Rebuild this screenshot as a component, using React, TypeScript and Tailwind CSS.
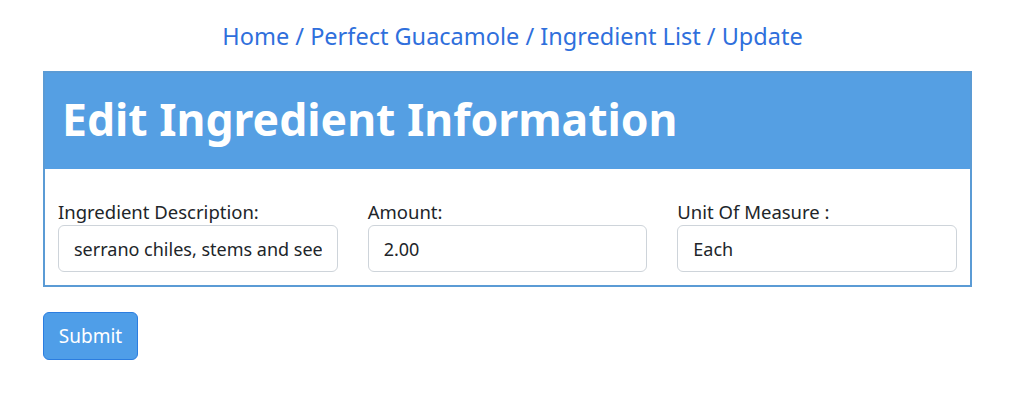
import React from 'react';

const fields = [
  { label: 'Ingredient Description:', value: 'serrano chiles, stems and seeds removed, minced' },
  { label: 'Amount:', value: '2.00' },
  { label: 'Unit Of Measure :', value: 'Each' },
];

export default function App() {
  return (
    <div className="w-[1025px] h-[405px] bg-white font-['Noto_Sans',sans-serif] text-[#212529]">
      <nav className="pt-[19px] text-center text-[23.5px] leading-[34px] text-[#2f6fdc]">
        <a href="#">Home</a> / <a href="#">Perfect Guacamole</a> / <a href="#">Ingredient List</a> / <a href="#">Update</a>
      </nav>

      <div className="mx-[43px] mt-[18px] w-[929px] border-2 border-[#5b9bd5]">
        <div className="bg-[#559fe3] h-[96px] flex items-center px-[17px]">
          <h1 className="text-white font-bold text-[44.5px] leading-none pb-[4px]">Edit Ingredient Information</h1>
        </div>
        <div className="grid grid-cols-3 gap-[30px] px-[13px] pt-[30px] pb-[13px]">
          {fields.map(f => (
            <label key={f.label} className="flex flex-col">
              <span className="text-[18.5px] leading-[25px] mb-[1px]">{f.label}</span>
              <input
                readOnly
                value={f.value}
                className="h-[47px] w-full rounded-[6px] border border-[#ced4da] px-[15px] text-[18px] text-[#212529] outline-none bg-white"
              />
            </label>
          ))}
        </div>
      </div>

      <button className="ml-[43px] mt-[25px] h-[48px] w-[95px] rounded-[6px] border border-[#2b7de0] bg-[#4f9ee8] text-white text-[19px]">
        Submit
      </button>
    </div>
  );
}
